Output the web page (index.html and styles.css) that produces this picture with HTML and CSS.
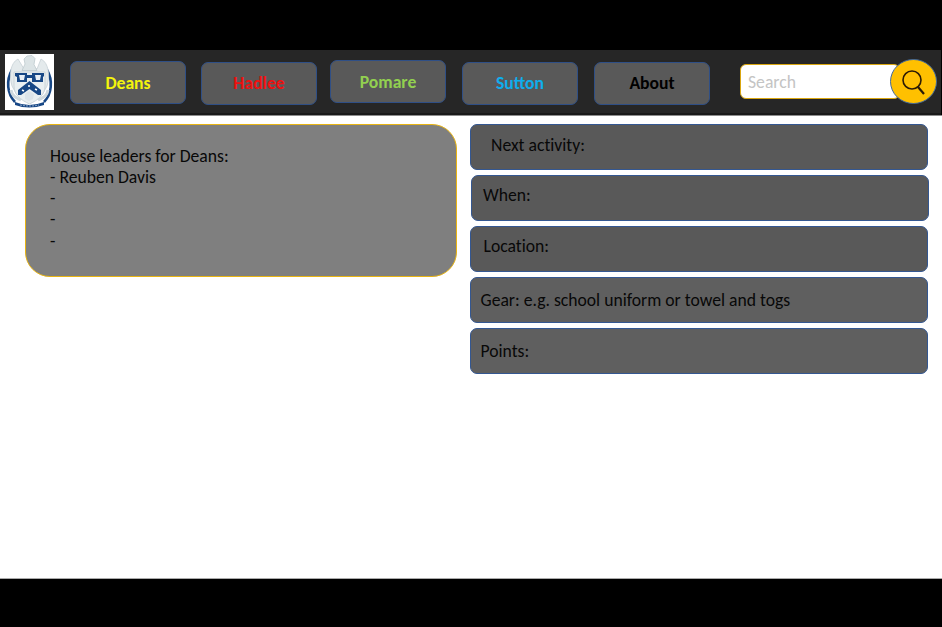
FILE: index.html
```html
<!DOCTYPE html>
<html lang="en">
<head>
<meta charset="utf-8">
<title>House page</title>
<link rel="stylesheet" href="styles.css">
</head>
<body>
<header class="bar">
  <svg class="crest" viewBox="0 0 49 56">
    <rect width="49" height="56" fill="#fff"/>
    <path d="M7 16C1 26 2 40 10 48M42 16c6 10 5 24-3 32" fill="none" stroke="#174785" stroke-width="2.600"/>
    <path d="M13 5C5 9 4 22 7 32l5 9 25 0 5-9c3-10 2-23-6-27l-4 10-7-2-6 2z" fill="#e4eaec" stroke="#c6d0d5" stroke-width=".8"/>
    <path d="M20 10l-1-5 3-3 5-.5 3 3-1 6 3 6H17z" fill="#dce4e6" stroke="#b9c5ca" stroke-width=".7"/>
    <path d="M9 18h31v14c0 9-7 14-15.500 18C16 46 9 41 9 32z" fill="#e9eff1" stroke="#c5d0d6" stroke-width=".8"/>
    <path d="M10 19h12v2h5v-2h12v3l-1 1v5H27v-4h-5v4H12v-5l-2-1z" fill="#174785"/>
    <path d="M14 21h6l-1 5h-4zM30 21h6l-1 5h-4z" fill="#e8eff5"/>
    <path d="M24.500 27L36 36v5h-3l-8.500-6-8.500 6h-3v-5z" fill="#174785"/>
    <path d="M17 36l2 1m5-6v2m6 2l2 1" stroke="#fff" stroke-width="1.500"/>
    <path d="M20 40l4-3 5 3-1 5-4 2-4-2z" fill="#dce4e9"/>
    <path d="M6 36c1 7 6 8 10 10M43 36c-1 7-6 8-10 10" fill="none" stroke="#cfd9de" stroke-width="3"/>
    <path d="M10 48q14 6 29 0v3q-15 5-29 0z" fill="#174785"/>
    <path d="M15 51q10 2 19 0" fill="none" stroke="#a9bdd7" stroke-width=".8" stroke-dasharray="2 1"/>
  </svg>
  <nav class="tabs">
    <a class="tab deans"><span>Deans</span></a>
    <a class="tab hadlee"><span>Hadlee</span></a>
    <a class="tab pomare"><span>Pomare</span></a>
    <a class="tab sutton"><span>Sutton</span></a>
    <a class="tab about"><span>About</span></a>
  </nav>
  <div class="search">
    <div class="field">Search</div>
    <svg class="go" viewBox="0 0 47 46">
      <ellipse cx="23.500" cy="22.500" rx="23" ry="22" fill="#ffc000" stroke="#41699c"/>
      <circle cx="22" cy="21" r="9" fill="none" stroke="#2b1b05" stroke-width="1.600"/>
      <path d="M28 28l6 7" stroke="#2b1b05" stroke-width="2.200"/>
    </svg>
  </div>
</header>
<main class="page">
  <section class="leaders">
    <p class="title">House leaders for Deans:</p>
    <p class="name">- Reuben Davis</p>
    <p>-</p>
    <p>-</p>
    <p>-</p>
  </section>
  <section class="details">
    <div class="row next"><span>Next activity:</span></div>
    <div class="row when"><span>When:</span></div>
    <div class="row location"><span>Location:</span></div>
    <div class="row gear"><span>Gear: e.g. school uniform or towel and togs</span></div>
    <div class="row points"><span>Points:</span></div>
  </section>
</main>
</body>
</html>
```
FILE: styles.css
```css
* { box-sizing: border-box; }
body {
  margin: 0;
  height: 627px;
  padding: 50px 0 48px;
  background: #000;
  overflow: hidden;
  display: flex;
  flex-direction: column;
  font: 17.650px/21.150px Carlito, Lato, sans-serif;
  font-variant-ligatures: none;
  color: #080808;
}
p { margin: 0; }
.bar {
  height: 65px;
  margin-right: 1px;
  padding-left: 5px;
  display: flex;
  align-items: flex-start;
  background: #262626;
  border-bottom: 2px solid #191919;
}
.crest { width: 49px; height: 56px; margin-top: 4px; }
.tabs { display: flex; margin: 11px 0 0 16px; font-variant-ligatures: normal; }
.tab {
  width: 116px;
  height: 43px;
  padding-top: 2px;
  border: 1px solid #2f4f86;
  border-radius: 7px;
  background: #595959;
  display: flex;
  align-items: center;
  justify-content: center;
  font-weight: 700;
}
.deans { color: #f4f40c; }
.hadlee { color: #ee1111; margin: 1px 0 0 15px; padding-top: 1px; }
.pomare { color: #92d050; margin: -1px 0 0 13px; }
.sutton { color: #0eaeee; margin: 1px 0 0 16px; padding-top: 1px; }
.about { color: #000; margin: 1px 0 0 16px; padding-top: 1px; }
.search { display: flex; margin: 9px 0 0 30px; }
.field {
  width: 160px;
  height: 35px;
  margin-top: 5px;
  padding: 7px 7px 0;
  background: #fff;
  border: 1px solid #d9a610;
  border-radius: 6px;
  color: #c4c4c4;
}
.go { width: 47px; height: 46px; margin-left: -10px; }
.page {
  flex: 1;
  display: flex;
  align-items: flex-start;
  gap: 13px;
  padding: 8px 14px 0 25px;
  background: #fff;
  border-top: 1px solid #8d8d8d;
  border-bottom: 1px solid #aaa;
}
.leaders {
  width: 432px;
  height: 153px;
  padding: 21px 24px;
  border: 1.500px solid #e8b413;
  border-radius: 25px;
  background: #7f7f7f;
}
.details { flex: 1; display: grid; grid-auto-rows: 46px; gap: 5px; }
.row {
  border: 1px solid #345791;
  border-radius: 7px;
  background: #595959;
  padding: 10px 0 0 9.500px;
}
.next { padding: 10px 0 0 20px; }
.when { margin-right: -1px; margin-left: 1px; padding: 9px 0 0 11px; }
.location { padding-left: 12.500px; padding-top: 9px; }
.gear, .points { background: #5f5f5f; padding-top: 12px; }
```
